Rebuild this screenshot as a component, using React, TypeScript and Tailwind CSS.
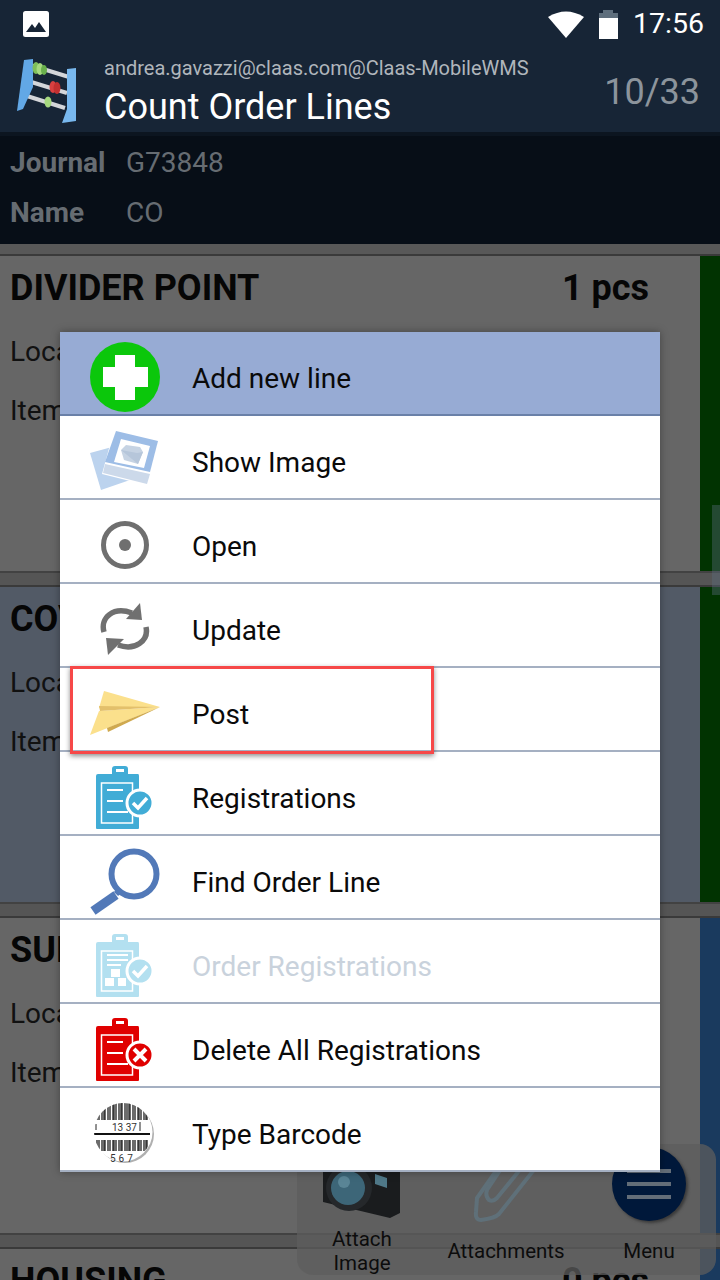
import React from "react";

const FONT = { fontFamily: "Roboto, sans-serif" };

function Abacus() {
  return (
    <svg width="60" height="64" viewBox="0 0 60 64" className="shrink-0">
      <path d="M13 6 L52 18" stroke="#d4d6d9" strokeWidth="4" />
      <path d="M11 22 L50 34" stroke="#d4d6d9" strokeWidth="4" />
      <path d="M10 37 L48 49" stroke="#d4d6d9" strokeWidth="4" />
      <path d="M7 1 L16 0 L16 28 L6 50 L0 52 Z" fill="#62a8e6" />
      <path d="M50 10 L59 9 L59 62 L45 64 L50 50 Z" fill="#78b8ee" />
      <ellipse cx="19" cy="9" rx="3.5" ry="6" fill="#7fbf5a" />
      <ellipse cx="23" cy="10" rx="3.5" ry="6" fill="#a6d97f" />
      <ellipse cx="27" cy="11" rx="3" ry="5" fill="#6ab04c" />
      <ellipse cx="36" cy="28" rx="3.5" ry="6" fill="#d84040" />
      <ellipse cx="40" cy="29" rx="3.5" ry="6" fill="#c23030" />
      <ellipse cx="31" cy="43" rx="3.5" ry="5.5" fill="#a6d97f" />
    </svg>
  );
}

function AddIcon() {
  return (
    <svg width="70" height="70" viewBox="0 0 70 70">
      <circle cx="35" cy="35" r="35" fill="#0bc70b" />
      <path d="M25 13 H45 V25 H58 V45 H45 V58 H25 V45 H13 V25 H25 Z" fill="#fff" />
    </svg>
  );
}
function ImageIcon() {
  return (
    <svg width="70" height="62" viewBox="0 0 70 62">
      <path d="M0 23 L22 17 L40 50 L11 60 Z" fill="#bcd3ee" />
      <path d="M24 0 L68 11 L56 55 L12 44 Z" fill="#fff" />
      <path d="M26 1 L68 11 L60 42 L15 32 Z" fill="#9dbde6" />
      <path d="M15 34 L60 44 L57 54 L13 43 Z" fill="#ccd9ea" />
      <path d="M31 9 L60 16 L54 38 L24 32 Z" fill="#fff" />
      <path d="M36 15 L50 17 L53 22 L48 34 L34 30 L31 20 Z" fill="#c6d3e3" />
      <path d="M31 20 L47 23 L53 22 L48 34 Z" fill="#b6c6da" />
    </svg>
  );
}
function OpenIcon() {
  return (
    <svg width="48" height="48" viewBox="0 0 48 48">
      <circle cx="24" cy="24" r="21.5" fill="none" stroke="#6f6f6f" strokeWidth="5" />
      <circle cx="24" cy="24" r="6" fill="#6f6f6f" />
    </svg>
  );
}
function UpdateIcon() {
  return (
    <svg width="50" height="52" viewBox="0 0 50 52">
      <path d="M4 29 C0 15 13 3 32 10" fill="none" stroke="#707070" strokeWidth="5.5" />
      <path d="M40 0 L42 17 L26 16 Z" fill="#707070" />
      <path d="M46 24 C49 38 35 48 18 42" fill="none" stroke="#707070" strokeWidth="5.5" />
      <path d="M8 52 L6 35 L24 36 Z" fill="#707070" />
    </svg>
  );
}
function PostIcon() {
  return (
    <svg width="70" height="44" viewBox="0 0 70 44">
      <path d="M14 0 L70 16 L9 17 Z" fill="#fbe08c" />
      <path d="M9 20 L70 16 L0 44 Z" fill="#fbe08c" />
      <path d="M9 15 L70 16 L10 20 Z" fill="#e3c06b" />
      <path d="M17 37 L70 16 L18 41 Z" fill="#cfa94f" />
    </svg>
  );
}
function Clip({ color, children, mark }: { color: string; children?: React.ReactNode; mark: React.ReactNode }) {
  return (
    <svg width="58" height="63" viewBox="0 0 58 63">
      <path d="M0 10 Q0 8 2 8 H16 V3 Q16 0 19 0 H29 Q32 0 32 3 V8 H42 Q43 8 43 10 V62 Q43 63 42 63 H1 Q0 63 0 62 Z" fill={color} />
      <rect x="20" y="3" width="8" height="3" fill="#fff" />
      <rect x="5.5" y="17" width="31" height="40" fill="none" stroke="#fff" strokeWidth="1.5" />
      {children}
      <circle cx="44" cy="37" r="13" fill={color} stroke="#fff" strokeWidth="3" />
      {mark}
    </svg>
  );
}
function RegIcon() {
  return (
    <Clip color="#41acd6" mark={<path d="M37 37 L42 42 L51 32" stroke="#fff" strokeWidth="3.5" fill="none" />}>
      <path d="M11 24 H27 M11 35 H27 M11 46 H32" stroke="#fff" strokeWidth="2" />
    </Clip>
  );
}
function OrderRegIcon() {
  return (
    <Clip color="#b3e0f0" mark={<path d="M37 37 L42 42 L51 32" stroke="#fff" strokeWidth="3.5" fill="none" />}>
      <path d="M11 21 H32 M11 26 H32 M11 31 H25" stroke="#fff" strokeWidth="2" />
      <path d="M9 44 H18 V52 H9 Z M22 44 H30 V52 H22 Z M15 35 H24 V43 H15 Z" fill="#fff" />
    </Clip>
  );
}
function DeleteIcon() {
  return (
    <Clip color="#e00000" mark={<path d="M38 31 L50 43 M50 31 L38 43" stroke="#fff" strokeWidth="4" />}>
      <path d="M11 24 H27 M11 35 H27 M11 46 H32" stroke="#fff" strokeWidth="2" />
    </Clip>
  );
}
function FindIcon() {
  return (
    <svg width="70" height="67" viewBox="0 0 70 67">
      <circle cx="44" cy="26" r="22.5" fill="none" stroke="#5279b8" strokeWidth="6" />
      <path d="M30 42 L26 46" stroke="#5279b8" strokeWidth="6" />
      <path d="M26 47 L3 63" stroke="#5279b8" strokeWidth="9" />
    </svg>
  );
}
function BarcodeIcon() {
  const bars = [1, 3, 6, 8, 9, 12, 14, 17, 18, 20, 23, 25, 26, 29, 31, 33, 34, 37, 39, 42, 43, 45, 48, 50, 51];
  return (
    <svg width="62" height="64" viewBox="0 0 62 64">
      <defs>
        <clipPath id="bc">
          <circle cx="29" cy="31" r="29" />
        </clipPath>
      </defs>
      <circle cx="31" cy="33" r="29" fill="#b0b0b0" />
      <circle cx="29" cy="31" r="29.5" fill="#fff" />
      <g clipPath="url(#bc)">
        {bars.map((x) => (
          <path key={x} d={`M${x + 2} 0 V19`} stroke="#1c1c1c" strokeWidth="1.3" />
        ))}
        {bars.map((x) => (
          <path key={`b${x}`} d={`M${x + 2} 39 V50`} stroke="#1c1c1c" strokeWidth="1.3" />
        ))}
        <path d="M0 33 H56" stroke="#111" strokeWidth="2" />
        <path d="M2 23 V29 M46 21 V30" stroke="#222" strokeWidth="1" />
      </g>
      <text x="18" y="30" fontSize="10" fill="#333" style={FONT}>13 37</text>
      <text x="16" y="61" fontSize="10" fill="#333" style={FONT} letterSpacing="3">567</text>
    </svg>
  );
}

const menu: { label: string; icon: React.ReactNode; active?: boolean; disabled?: boolean }[] = [
  { label: "Add new line", icon: <AddIcon />, active: true },
  { label: "Show Image", icon: <ImageIcon /> },
  { label: "Open", icon: <OpenIcon /> },
  { label: "Update", icon: <UpdateIcon /> },
  { label: "Post", icon: <PostIcon /> },
  { label: "Registrations", icon: <RegIcon /> },
  { label: "Find Order Line", icon: <FindIcon /> },
  { label: "Order Registrations", icon: <OrderRegIcon />, disabled: true },
  { label: "Delete All Registrations", icon: <DeleteIcon /> },
  { label: "Type Barcode", icon: <BarcodeIcon /> },
];

function Card({ title, qty, bg, stripe, last }: { title: string; qty: string; bg: string; stripe: string; last?: boolean }) {
  return (
    <div className={`flex h-[315px] shrink-0 ${bg}`}>
      <div className="flex-1 pl-[10px] pr-[51px] pt-[9px]">
        <div className="flex justify-between text-[36px] font-bold leading-[46px] text-[#060606]">
          <span>{title}</span>
          <span>{qty}</span>
        </div>
        {!last && (
          <>
            <div className="mt-[22px] text-[28px] leading-[38px] text-[#111]">Location</div>
            <div className="mt-[21px] text-[28px] leading-[38px] text-[#111]">Item</div>
          </>
        )}
      </div>
      <div className={`w-[20px] ${stripe}`} />
    </div>
  );
}

function Gap() {
  return <div className="h-[16px] shrink-0 border-y-2 border-t-[#424242] border-b-[#3a3a3a] bg-[#555]" />;
}

export default function App() {
  return (
    <div className="relative h-[1280px] w-[720px] overflow-hidden bg-[#555]" style={FONT}>
      {/* header */}
      <div className="h-[132px] bg-[#172536]">
        <div className="flex h-[50px] items-center justify-between pl-[23px] pr-[16px]">
          <svg width="26" height="26" viewBox="0 0 26 26" className="-mt-[2px]">
            <rect width="26" height="26" rx="2.5" fill="#fff" />
            <path d="M3 21 L9 13 L12 17 L16 11 L23 21 Z" fill="#172536" />
          </svg>
          <div className="flex items-center">
            <svg width="36" height="28" viewBox="0 0 36 28" className="mr-[15px] -mt-[2px]">
              <path d="M0 7 Q18 -4 36 7 L18 28 Z" fill="#fff" />
            </svg>
            <svg width="19" height="29" viewBox="0 0 19 29" className="mr-[15px] -mt-[1px]">
              <path d="M4 0 H14 V3 H19 V8 H0 V3 H4 Z" fill="#5e6e7c" />
              <rect y="8" width="19" height="21" fill="#fff" />
            </svg>
            <span className="-mt-[2px] text-[28.5px] leading-[36px] text-white">17:56</span>
          </div>
        </div>
        <div className="flex items-start pl-[17px] pr-[20px]">
          <div className="mt-[9px]">
            <Abacus />
          </div>
          <div className="ml-[27px] flex-1">
            <div className="mt-[4px] text-[20px] leading-[28px] text-[#b0b6bc]">andrea.gavazzi@claas.com@Claas-MobileWMS</div>
            <div className="mt-[3px] text-[36px] leading-[44px] text-white">Count Order Lines</div>
          </div>
          <div className="mt-[20px] text-[36px] leading-[44px] text-[#8c949c]">10/33</div>
        </div>
      </div>
      {/* journal */}
      <div className="h-[4px] bg-[#0c1520]" />
      <div className="flex h-[108px] flex-col justify-center gap-[14px] bg-[#070e17] pb-[4px] pl-[10px] text-[28px] leading-[36px] text-[#666c72]">
        <div className="flex">
          <span className="w-[116px] font-bold">Journal</span>
          <span>G73848</span>
        </div>
        <div className="flex">
          <span className="w-[116px] font-bold">Name</span>
          <span>CO</span>
        </div>
      </div>
      <div className="h-[12px] border-b-2 border-b-[#3a3a3a] bg-[#585858]" />
      {/* list */}
      <Card title="DIVIDER POINT" qty="1 pcs" bg="bg-[#666666]" stripe="bg-[#013301]" />
      <Gap />
      <Card title="COVER" qty="1 pcs" bg="bg-[#525a66]" stripe="bg-[#013301]" />
      <Gap />
      <Card title="SUPPORT" qty="1 pcs" bg="bg-[#666666]" stripe="bg-[#1a3a5e]" />
      <Gap />
      <Card title="HOUSING" qty="0 pcs" bg="bg-[#666666]" stripe="bg-[#1a3a5e]" last />

      {/* scroll thumb */}
      <div className="absolute right-0 top-[505px] h-[90px] w-[8px] bg-[#5a6b7d]/40" />

      {/* floating toolbar */}
      <div className="absolute left-[297px] top-[1144px] grid h-[131px] w-[419px] grid-cols-[130px_158px_128px] items-end rounded-[16px] bg-[#5e5e5e]/75 text-center text-[20.5px] leading-[24px] text-[#0c0c0c]">
        <div className="flex flex-col items-center">
          <svg width="78" height="58" viewBox="0 0 78 58" className="mb-[9px]">
            <path d="M0 0 H77 V53 L67 58 L0 42 Z" fill="#1a1c1e" />
            <circle cx="26" cy="28" r="23" fill="#25282b" />
            <circle cx="25" cy="28" r="17" fill="#3d6678" />
            <circle cx="21" cy="22" r="6" fill="#5a8596" />
            <path d="M52 14 L64 18 V28 L52 24 Z" fill="#4f7888" />
          </svg>
          <span>
            Attach
            <br />
            Image
          </span>
        </div>
        <div className="flex flex-col items-center pb-[12px]">
          <svg width="66" height="60" viewBox="0 0 66 60" className="mb-[17px]">
            <path d="M64 4 L26 52 Q22 56 8 58 Q2 58 3 50 L4 36 L28 2" fill="none" stroke="#5f7079" strokeWidth="4" />
            <path d="M50 4 L24 36 Q20 40 16 38 Q12 34 14 28 L30 4" fill="none" stroke="#5f7079" strokeWidth="4" />
          </svg>
          <span>Attachments</span>
        </div>
        <div className="flex flex-col items-center pb-[12px]">
          <div className="mb-[18px] flex h-[74px] w-[74px] flex-col items-center justify-center gap-[9px] rounded-full bg-[#00183a] shadow-[2px_2px_3px_#3a3a3a]">
            <div className="h-[4px] w-[44px] bg-[#636d78]" />
            <div className="h-[4px] w-[44px] bg-[#636d78]" />
            <div className="h-[4px] w-[44px] bg-[#636d78]" />
          </div>
          <span>Menu</span>
        </div>
      </div>

      {/* menu modal */}
      <div className="absolute left-[60px] top-[332px] w-[600px] bg-white text-[28px] text-[#0a0a0a] shadow-[0_0_8px_rgba(0,0,0,0.35)]">
        {menu.map((m) => (
          <div
            key={m.label}
            className={`flex h-[84px] items-center border-b-2 pt-[8px] ${
              m.active ? "border-b-[#6a80a8] bg-[#97abd4]" : "border-b-[#a5b0c2] bg-white"
            }`}
          >
            <div className="flex w-[132px] shrink-0 items-center justify-center pr-[2px]">{m.icon}</div>
            <span className={`mt-[3px] ${m.disabled ? "text-[#c9d2dc]" : ""}`}>{m.label}</span>
          </div>
        ))}
      </div>

      {/* annotation */}
      <div className="absolute left-[70px] top-[666px] h-[88px] w-[364px] border-[3px] border-[#f64848] shadow-[0_2px_5px_rgba(0,0,0,0.45)]" />
    </div>
  );
}
